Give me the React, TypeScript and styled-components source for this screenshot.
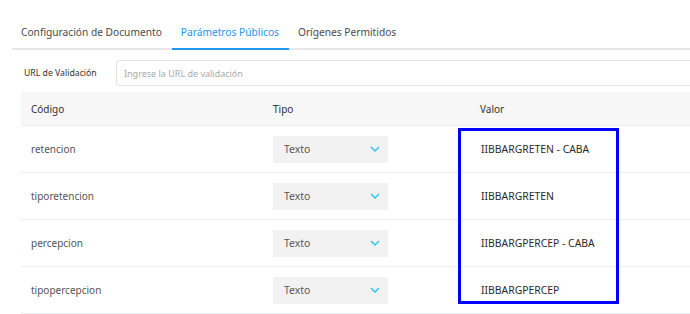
import styled, { createGlobalStyle } from "styled-components";

const GlobalStyle = createGlobalStyle`
    body {
        margin: 0;
        background: #ffffff;
        font-family: "Noto Sans", "DejaVu Sans", sans-serif;
        overflow: hidden;
    }
`;

const Page = styled.div`
    width: 690px;
    height: 314px;
    position: relative;
    overflow: hidden;
`;

const TabBar = styled.div`
    display: flex;
    margin: 16px 0 0 12px;
    border-bottom: 2px solid #e6e8eb;
`;

const Tab = styled.div<{ active?: boolean }>`
    padding: 9px 10px 9px 9px;
    font-size: 10.2px;
    color: ${(props) => (props.active ? "#2196f3" : "#4a4a4a")};
    margin-bottom: -2px;
    border-bottom: 2px solid ${(props) => (props.active ? "#2196f3" : "transparent")};
    white-space: nowrap;
`;

const UrlRow = styled.div`
    display: flex;
    align-items: center;
    margin: 10px 0 0 24px;
`;

const UrlLabel = styled.label`
    width: 92px;
    font-size: 8.7px;
    color: #333;
`;

const UrlInput = styled.div`
    flex: 1;
    height: 24px;
    margin-right: -10px;
    border: 1px solid #e4e4e4;
    border-radius: 3px;
    display: flex;
    align-items: center;
    padding-left: 7px;
    font-size: 9px;
    color: #aaa;
`;

const Table = styled.div`
    margin: 6px -20px 0 21px;
`;

const Row = styled.div<{ head?: boolean }>`
    display: grid;
    grid-template-columns: 242px 207px 1fr;
    align-items: center;
    height: ${(props) => (props.head ? "33px" : "46px")};
    background: ${(props) => (props.head ? "#f7f7f8" : "#fff")};
    border-bottom: 1px solid #eeeff0;
`;

const Cell = styled.div<{ head?: boolean; strong?: boolean }>`
    padding-left: ${(props) => (props.strong ? "11px" : "10px")};
    font-size: ${(props) => (props.head ? "10px" : props.strong ? "10.4px" : "10px")};
    color: ${(props) => (props.head ? "#333" : props.strong ? "#2a2a2a" : "#555")};
`;

const Select = styled.div`
    width: 115px;
    height: 27px;
    margin-left: 10px;
    background: #f2f2f2;
    display: flex;
    align-items: center;
    justify-content: space-between;
    padding: 0 8px 0 11px;
    box-sizing: border-box;
    font-size: 10.4px;
    color: #555;
`;

const Highlight = styled.div`
    position: absolute;
    left: 458px;
    top: 128px;
    width: 155px;
    height: 170px;
    border: 3px solid #0000ff;
`;

const rows = [
    { code: "retencion", value: "IIBBARGRETEN - CABA" },
    { code: "tiporetencion", value: "IIBBARGRETEN" },
    { code: "percepcion", value: "IIBBARGPERCEP - CABA" },
    { code: "tipopercepcion", value: "IIBBARGPERCEP" },
];

function Chevron() {
    return (
        <svg width="10" height="6" viewBox="0 0 10 6">
            <path d="M1 1 L5 5 L9 1" fill="none" stroke="#29c4f5" strokeWidth="1.4" />
        </svg>
    );
}

export default function App() {
    return (
        <Page>
            <GlobalStyle />
            <TabBar>
                <Tab>Configuración de Documento</Tab>
                <Tab active>Parámetros Públicos</Tab>
                <Tab>Orígenes Permitidos</Tab>
            </TabBar>
            <UrlRow>
                <UrlLabel>URL de Validación</UrlLabel>
                <UrlInput>Ingrese la URL de validación</UrlInput>
            </UrlRow>
            <Table>
                <Row head>
                    <Cell head>Código</Cell>
                    <Cell head>Tipo</Cell>
                    <Cell head>Valor</Cell>
                </Row>
                {rows.map((r) => (
                    <Row key={r.code}>
                        <Cell>{r.code}</Cell>
                        <div>
                            <Select>
                                Texto
                                <Chevron />
                            </Select>
                        </div>
                        <Cell strong>{r.value}</Cell>
                    </Row>
                ))}
            </Table>
            <Highlight />
        </Page>
    );
}
